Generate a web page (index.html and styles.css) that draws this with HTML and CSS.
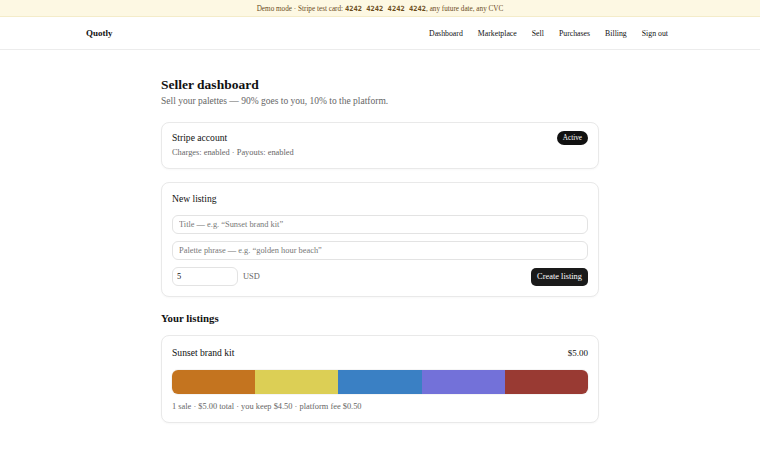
FILE: index.html
```html
<!DOCTYPE html>
<html lang="en">
<head>
    <meta charset="UTF-8">
    <meta name="viewport" content="width=device-width, initial-scale=1.0">
    <title>Quotly - Seller dashboard</title>
    <link rel="stylesheet" href="styles.css">
</head>
<body>

    <!-- Demo banner -->
    <div class="demo-banner">
        Demo mode · Stripe test card: <code>4242 4242 4242 4242</code>, any future date, any CVC
    </div>

    <!-- Top navigation -->
    <header class="topbar">
        <div class="topbar-inner">
            <a class="brand" href="#">Quotly</a>
            <nav class="nav-links">
                <a href="#">Dashboard</a>
                <a href="#">Marketplace</a>
                <a href="#">Sell</a>
                <a href="#">Purchases</a>
                <a href="#">Billing</a>
                <a href="#">Sign out</a>
            </nav>
        </div>
    </header>

    <main class="page">
        <h1>Seller dashboard</h1>
        <p class="subtitle">Sell your palettes — 90% goes to you, 10% to the platform.</p>

        <!-- Stripe account -->
        <section class="card account-card">
            <div class="card-head">
                <div class="card-title">Stripe account</div>
                <span class="badge">Active</span>
            </div>
            <div class="muted status-line">Charges: enabled · Payouts: enabled</div>
        </section>

        <!-- New listing form -->
        <section class="card">
            <div class="card-title">New listing</div>
            <form class="listing-form" onsubmit="return false;">
                <input type="text" class="field" placeholder="Title — e.g. “Sunset brand kit”">
                <input type="text" class="field" placeholder="Palette phrase — e.g. “golden hour beach”">
                <div class="price-row">
                    <input type="number" class="field price-field" value="5">
                    <span class="currency">USD</span>
                    <button class="create-btn">Create listing</button>
                </div>
            </form>
        </section>

        <h2>Your listings</h2>

        <!-- Listing -->
        <section class="card listing-card">
            <div class="card-head">
                <div class="card-title">Sunset brand kit</div>
                <span class="price">$5.00</span>
            </div>
            <div class="palette">
                <span style="background-color: #c4741f;"></span>
                <span style="background-color: #dccf55;"></span>
                <span style="background-color: #3a80c4;"></span>
                <span style="background-color: #7371d9;"></span>
                <span style="background-color: #993a33;"></span>
            </div>
            <div class="muted">1 sale · $5.00 total · you keep $4.50 · platform fee $0.50</div>
        </section>
    </main>

</body>
</html>
```

FILE: styles.css
```css
* {
    box-sizing: border-box;
}
body {
    margin: 0;
    font-family: "Liberation Serif", "Times New Roman", serif;
    font-size: 9.6px;
    color: #111;
    background-color: #fff;
}
a {
    color: inherit;
    text-decoration: none;
}

/* banner */
.demo-banner {
    height: 17px;
    line-height: 17px;
    text-align: center;
    font-size: 7.2px;
    color: #6b4c1c;
    background-color: #fdf8e3;
    border-bottom: 1px solid #f4ecc9;
}
.demo-banner code {
    font-family: "DejaVu Sans Mono", monospace;
    font-size: 7.1px;
    font-weight: bold;
}

/* nav */
.topbar {
    height: 33px;
    border-bottom: 1px solid #ececec;
}
.topbar-inner {
    width: 588px;
    height: 100%;
    margin: 0 auto;
    padding-right: 6px;
    display: flex;
    align-items: center;
    justify-content: space-between;
}
.brand {
    font-size: 9px;
    font-weight: bold;
}
.nav-links {
    display: flex;
    gap: 15px;
    font-size: 7.8px;
}

/* page */
.page {
    width: 438px;
    margin: 0 auto;
    padding-top: 27px;
}
h1 {
    margin: 0;
    font-size: 13.5px;
    line-height: 16px;
}
.subtitle {
    margin: 2px 0 15px;
    font-size: 9.5px;
    line-height: 12px;
    color: #666;
}
h2 {
    margin: 15px 0 10px;
    font-size: 10.8px;
    line-height: 13px;
}
.card {
    border: 1px solid #e9e9e9;
    border-radius: 8px;
    padding: 10px;
    margin-bottom: 13px;
    background-color: #fff;
    box-shadow: 0 1px 2px rgba(0, 0, 0, 0.03);
}
.account-card {
    padding-top: 8px;
}
.listing-card {
    padding-top: 11px;
}
.card-head {
    display: flex;
    align-items: center;
    justify-content: space-between;
}
.card-title {
    font-size: 9.6px;
    line-height: 12px;
}
.muted {
    font-size: 8.4px;
    line-height: 11px;
    color: #666;
}
.status-line {
    margin-top: 2px;
}
.badge {
    height: 14px;
    line-height: 14px;
    padding: 0 6px;
    border-radius: 7px;
    background-color: #111;
    color: #fff;
    font-size: 7.2px;
}
.price {
    font-size: 9px;
}

/* form */
.listing-form {
    margin-top: 10px;
    display: flex;
    flex-direction: column;
    gap: 7px;
}
.field {
    height: 19px;
    width: 100%;
    padding: 0 6px;
    border: 1px solid #e3e3e3;
    border-radius: 6px;
    font-family: inherit;
    font-size: 8.4px;
    color: #111;
    background-color: #fff;
    outline: none;
}
.field::placeholder {
    color: #777;
}
.price-row {
    display: flex;
    align-items: center;
}
.price-field {
    width: 66px;
    padding: 0 4px;
    -moz-appearance: textfield;
}
.price-field::-webkit-inner-spin-button,
.price-field::-webkit-outer-spin-button {
    -webkit-appearance: none;
    margin: 0;
}
.currency {
    margin-left: 5px;
    font-size: 8.4px;
    color: #666;
}
.create-btn {
    margin-left: auto;
    height: 18px;
    padding: 0 6px;
    border: none;
    border-radius: 5px;
    background-color: #1a1a1a;
    color: #fff;
    font-family: inherit;
    font-size: 8.4px;
    cursor: pointer;
}

/* palette */
.palette {
    display: flex;
    height: 24px;
    margin: 11px 0 7px;
    border-radius: 6px;
    overflow: hidden;
    box-shadow: 0 0 0 1px rgba(0, 0, 0, 0.04);
}
.palette span {
    flex: 1;
}
```
